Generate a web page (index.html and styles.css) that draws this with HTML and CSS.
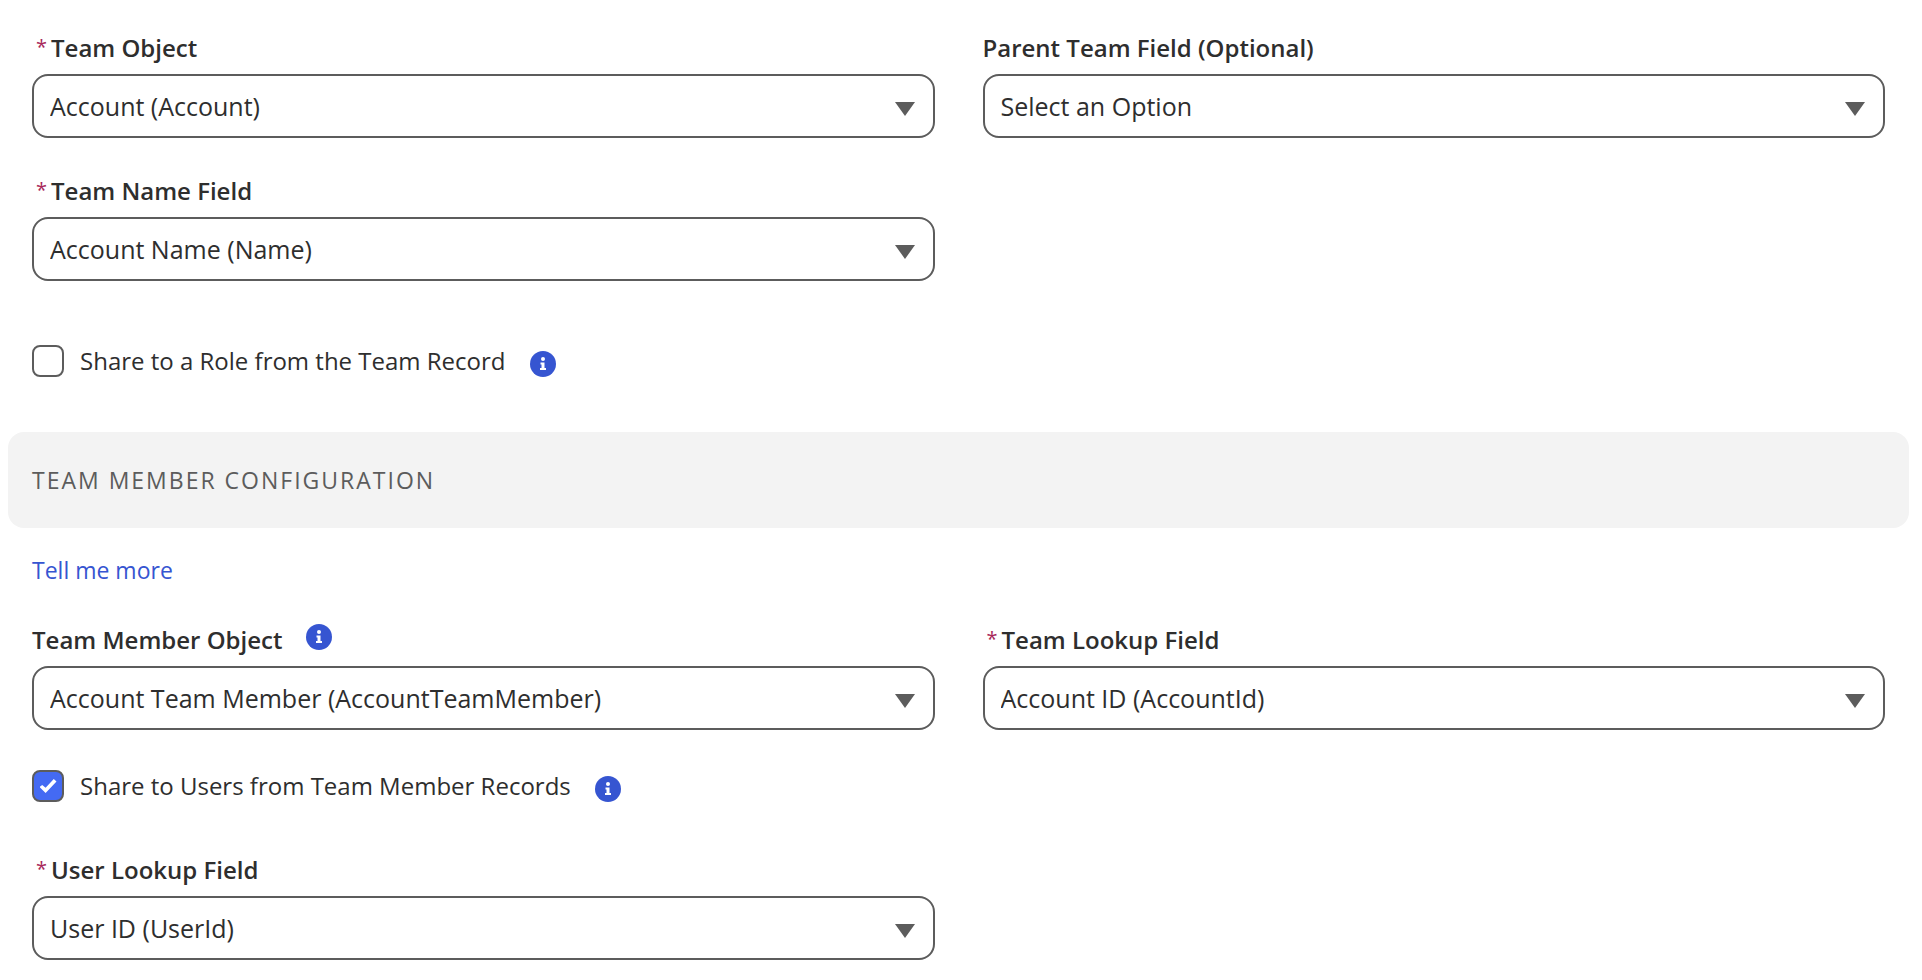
FILE: index.html
```
<!DOCTYPE html>
<html lang="en">
<head>
    <meta charset="UTF-8">
    <meta name="viewport" content="width=device-width, initial-scale=1.0">
    <title>Team Configuration</title>
    <link rel="stylesheet" href="styles.css">
</head>
<body>
    <form class="config">
        <div class="fields">
            <div class="field">
                <div class="field-header">
                    <label class="field-label" for="teamObject"><abbr class="required" title="required">*</abbr>Team Object</label>
                </div>
                <div class="select">
                    <select id="teamObject" required>
                        <option>Account (Account)</option>
                    </select>
                </div>
            </div>
            <div class="field">
                <div class="field-header">
                    <label class="field-label" for="parentTeamField">Parent Team Field (Optional)</label>
                </div>
                <div class="select">
                    <select id="parentTeamField">
                        <option>Select an Option</option>
                    </select>
                </div>
            </div>
            <div class="field">
                <div class="field-header">
                    <label class="field-label" for="teamNameField"><abbr class="required" title="required">*</abbr>Team Name Field</label>
                </div>
                <div class="select">
                    <select id="teamNameField" required>
                        <option>Account Name (Name)</option>
                    </select>
                </div>
            </div>
        </div>

        <div class="check-row role-row">
            <input class="checkbox" type="checkbox" id="shareRole">
            <label class="check-label" for="shareRole">Share to a Role from the Team Record</label>
            <button class="info" type="button" aria-label="Help">
                <svg viewBox="0 0 26 26" width="26" height="26">
                    <circle cx="13" cy="13" r="13" fill="#3655d1"/>
                    <circle cx="13" cy="8" r="2" fill="#fff"/>
                    <path d="M10.5 11.5h4v5.500h1.500v2h-6v-2h1.500v-3.500h-1z" fill="#fff"/>
                </svg>
            </button>
        </div>

        <h2 class="section-title">TEAM MEMBER CONFIGURATION</h2>

        <p class="more"><a href="#">Tell me more</a></p>

        <div class="fields">
            <div class="field">
                <div class="field-header">
                    <label class="field-label" for="memberObject">Team Member Object</label>
                    <button class="info" type="button" aria-label="Help">
                        <svg viewBox="0 0 26 26" width="26" height="26">
                            <circle cx="13" cy="13" r="13" fill="#3655d1"/>
                            <circle cx="13" cy="8" r="2" fill="#fff"/>
                            <path d="M10.5 11.5h4v5.500h1.500v2h-6v-2h1.500v-3.500h-1z" fill="#fff"/>
                        </svg>
                    </button>
                </div>
                <div class="select">
                    <select id="memberObject">
                        <option>Account Team Member (AccountTeamMember)</option>
                    </select>
                </div>
            </div>
            <div class="field">
                <div class="field-header">
                    <label class="field-label" for="teamLookup"><abbr class="required" title="required">*</abbr>Team Lookup Field</label>
                </div>
                <div class="select">
                    <select id="teamLookup" required>
                        <option>Account ID (AccountId)</option>
                    </select>
                </div>
            </div>
        </div>

        <div class="check-row users-row">
            <input class="checkbox" type="checkbox" id="shareUsers" checked>
            <label class="check-label" for="shareUsers">Share to Users from Team Member Records</label>
            <button class="info" type="button" aria-label="Help">
                <svg viewBox="0 0 26 26" width="26" height="26">
                    <circle cx="13" cy="13" r="13" fill="#3655d1"/>
                    <circle cx="13" cy="8" r="2" fill="#fff"/>
                    <path d="M10.5 11.5h4v5.500h1.500v2h-6v-2h1.500v-3.500h-1z" fill="#fff"/>
                </svg>
            </button>
        </div>

        <div class="fields">
            <div class="field">
                <div class="field-header">
                    <label class="field-label" for="userLookup"><abbr class="required" title="required">*</abbr>User Lookup Field</label>
                </div>
                <div class="select">
                    <select id="userLookup" required>
                        <option>User ID (UserId)</option>
                    </select>
                </div>
            </div>
        </div>
    </form>
</body>
</html>
```
FILE: styles.css
```
* {
    box-sizing: border-box;
}
body {
    margin: 0;
    background: #fff;
    color: #2e2e2e;
    font-family: "Segoe UI", "Open Sans", sans-serif;
    font-size: 24px;
    line-height: 32px;
}
.config {
    padding: 32px 13px 20px 8px;
}
.fields {
    display: grid;
    grid-template-columns: 1fr 1fr;
    gap: 37px 48px;
    padding: 0 24px;
}
.field-header {
    display: flex;
    align-items: flex-start;
    gap: 24px;
    margin-bottom: 10px;
}
.field-label {
    font-weight: 600;
}
.required {
    margin: 0 4px;
    color: #a8285a;
    font-weight: 400;
    font-size: 20px;
    line-height: 1;
    vertical-align: 3px;
    text-decoration: none;
}
.select {
    position: relative;
}
.select::after {
    content: "";
    position: absolute;
    top: 28px;
    right: 20px;
    border: 10px solid transparent;
    border-top: 14px solid #5c5c5c;
    border-bottom: 0;
    pointer-events: none;
}
.select select {
    display: block;
    width: 100%;
    height: 64px;
    padding: 0 48px 0 16px;
    border: 2px solid #5c5c5c;
    border-radius: 16px;
    background: #fff;
    color: #2e2e2e;
    font: inherit;
    font-size: 25px;
    appearance: none;
}
.check-row {
    display: flex;
    align-items: flex-end;
    padding: 0 24px;
}
.role-row {
    margin: 64px 0 55px;
}
.users-row {
    margin: 40px 0 52px;
}
.checkbox {
    display: grid;
    place-items: center;
    width: 32px;
    height: 32px;
    margin: 0 16px 0 0;
    border: 2px solid #5c5c5c;
    border-radius: 8px;
    background: #fff;
    appearance: none;
}
.checkbox:checked {
    background: #446af3;
}
/* tick */
.checkbox:checked::after {
    content: "";
    width: 17px;
    height: 14px;
    background: #fff;
    clip-path: polygon(0 58%, 16% 42%, 36% 62%, 84% 0, 100% 18%, 36% 100%);
}
.check-label {
    margin-right: 24px;
}
.info {
    display: block;
    width: 26px;
    height: 26px;
    padding: 0;
    border: 0;
    background: none;
    cursor: pointer;
}
.info svg {
    display: block;
}
.section-title {
    margin: 0;
    padding: 32px 24px;
    border-radius: 16px;
    background: #f3f3f3;
    color: #5c5c5c;
    font-size: 23px;
    font-weight: 400;
    letter-spacing: 2px;
}
.more {
    margin: 26px 0 38px;
    padding: 0 24px;
    font-size: 23px;
}
.more a {
    color: #3655d1;
    text-decoration: none;
}
```
